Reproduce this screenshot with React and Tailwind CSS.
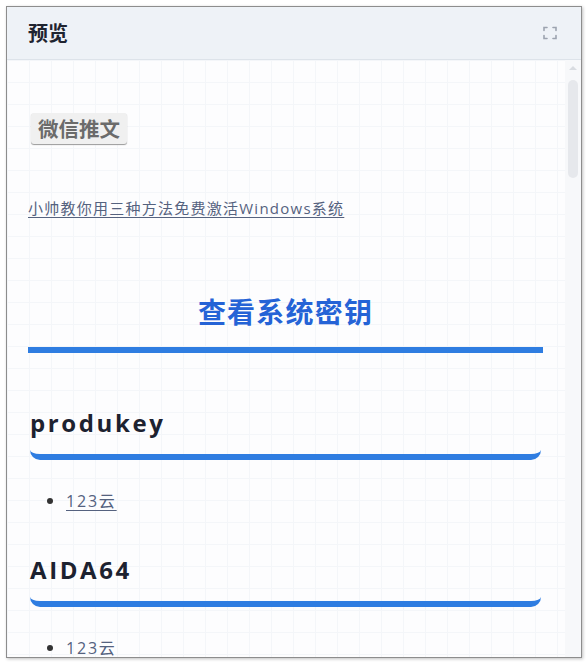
import React from "react";

function ExpandIcon() {
  return (
    <svg width="14" height="14" viewBox="0 0 14 14" fill="none" stroke="#9ca3af" strokeWidth="1.6" strokeLinecap="round">
      <path d="M1 4.5V1.5h3M10 1.5h3v3M13 9.5v3h-3M4 12.5H1v-3" />
    </svg>
  );
}

function H3({ children }) {
  return (
    <h3 className="mx-[2px] pb-[14px] border-b-[6px] border-[#2f7de1] rounded-[10px] text-[24px] leading-[34px] font-bold tracking-[2.6px] text-[#1d2230] font-['Open_Sans','Noto_Sans_CJK_SC',sans-serif]">
      {children}
    </h3>
  );
}

function Bullet({ children }) {
  return (
    <ul className="pl-[38px] list-disc marker:text-[#333] marker:text-[18px] text-[16px] leading-[24px] font-['Open_Sans','Noto_Sans_CJK_SC',sans-serif]">
      <li>
        <a className="text-[#55627f] underline underline-offset-[3px] tracking-[1.8px]">{children}</a>
      </li>
    </ul>
  );
}

export default function App() {
  return (
    <div className="w-[588px] h-[663px] bg-white p-[6px] pb-[3px]">
      <div className="w-[576px] h-[652px] border border-[#8d8d8d] shadow-[1px_1px_3px_rgba(0,0,0,0.25)] flex flex-col overflow-hidden bg-white">
        <div className="h-[53px] shrink-0 bg-[#eef2f7] border-b border-[#dde3ea] flex items-center justify-between pl-[21px] pr-[24px]">
          <span className="text-[20px] font-bold text-[#1f2430] font-['Noto_Sans_CJK_SC',sans-serif]">预览</span>
          <ExpandIcon />
        </div>
        <div className="flex-1 flex min-h-0 bg-[#fdfdfe] bg-[linear-gradient(#f4f6f9_1px,transparent_1px),linear-gradient(90deg,#f4f6f9_1px,transparent_1px)] bg-[size:22px_22px]">
          <div className="flex-1 pl-[21px] pr-[22px] pt-[53px] overflow-hidden">
            <div>
              <span className="inline-block h-[31px] px-[7px] ml-[3px] rounded-[3px] bg-[#f0f0f0] shadow-[0_1px_1px_#999] text-[20.5px] leading-[31px] font-bold text-[#6b6b6b] font-['Noto_Sans_CJK_SC',sans-serif]">
                微信推文
              </span>
            </div>
            <p className="mt-[52px] text-[15px] leading-[24px] tracking-[1.25px] font-['Open_Sans','Noto_Sans_CJK_SC',sans-serif]">
              <a className="text-[#55627f] underline underline-offset-[3px]">小帅教你用三种方法免费激活Windows系统</a>
            </p>
            <h2 className="mt-[71px] text-center text-[28px] leading-[40px] font-bold text-[#2563d6] tracking-[1.2px] font-['Noto_Sans_CJK_SC',sans-serif]">
              查看系统密钥
            </h2>
            <div className="mt-[16px] h-[6px] bg-[#2f7de1]" />
            <div className="mt-[53px]">
              <H3>produkey</H3>
            </div>
            <div className="mt-[28px]">
              <Bullet>123云</Bullet>
            </div>
            <div className="mt-[40px]">
              <H3>AIDA64</H3>
            </div>
            <div className="mt-[28px]">
              <Bullet>123云</Bullet>
            </div>
          </div>
          <div className="w-[16px] shrink-0 bg-[#f7f8fa] flex flex-col items-center pt-[6px]">
            <div className="w-0 h-0 border-l-[4px] border-r-[4px] border-b-[4px] border-l-transparent border-r-transparent border-b-[#d9dce1]" />
            <div className="mt-[10px] w-[10px] h-[98px] rounded-full bg-[#e6e8ec]" />
          </div>
        </div>
      </div>
    </div>
  );
}
